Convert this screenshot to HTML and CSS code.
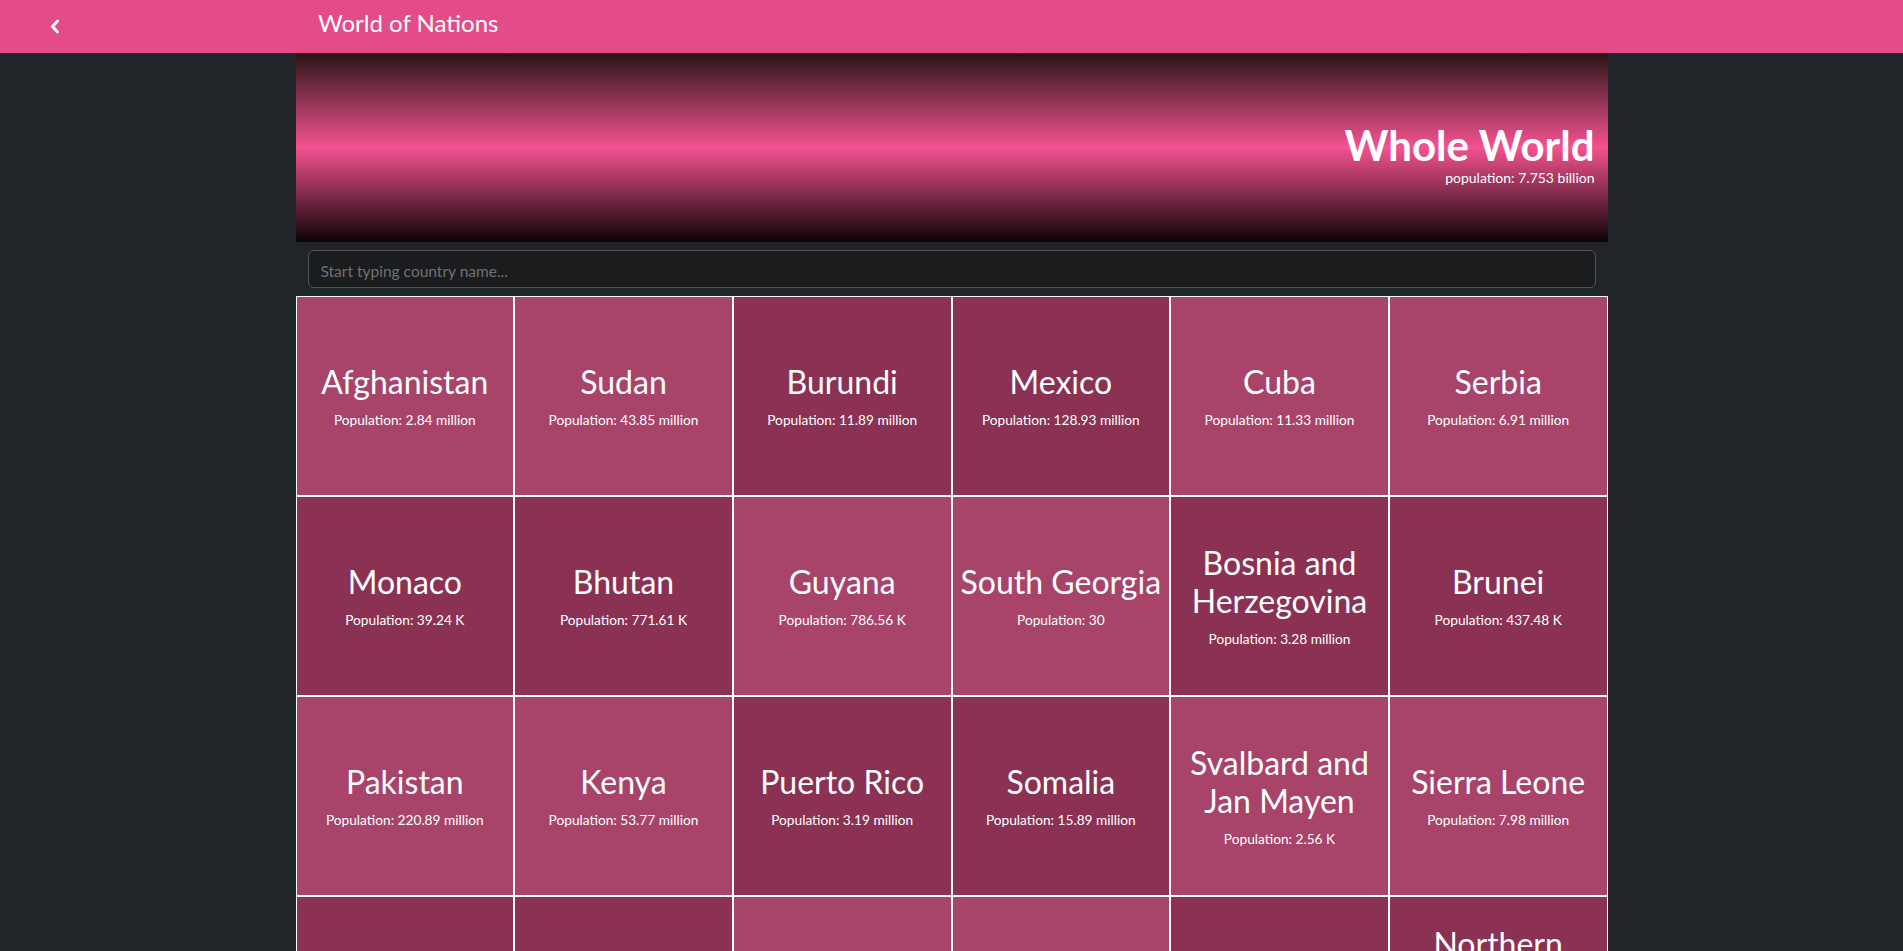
FILE: index.html
```html
<!DOCTYPE html>
<html lang="en">
<head>
<meta charset="utf-8">
<title>World of Nations</title>
<link rel="stylesheet" href="styles.css">
</head>
<body>
<header class="topbar">
  <a class="back" href="#" aria-label="Back">
    <svg width="10" height="15" viewBox="0 0 10 15"><polyline points="7.5,2 2.5,7.5 7.5,13" fill="none" stroke="#fff" stroke-width="3" stroke-linecap="round" stroke-linejoin="round"/></svg>
  </a>
  <span class="brand">World of Nations</span>
</header>
<main class="container">
  <section class="banner">
    <h1 class="banner-title">Whole World</h1>
    <div class="banner-pop">population: 7.753 billion</div>
  </section>
  <div class="search">
    <input class="search-input" type="text" placeholder="Start typing country name...">
  </div>
  <div class="grid">
    <div class="cell light"><h2 class="name">Afghanistan</h2><div class="pop">Population: 2.84 million</div></div>
    <div class="cell light"><h2 class="name">Sudan</h2><div class="pop">Population: 43.85 million</div></div>
    <div class="cell dark"><h2 class="name">Burundi</h2><div class="pop">Population: 11.89 million</div></div>
    <div class="cell dark"><h2 class="name">Mexico</h2><div class="pop">Population: 128.93 million</div></div>
    <div class="cell light"><h2 class="name">Cuba</h2><div class="pop">Population: 11.33 million</div></div>
    <div class="cell light"><h2 class="name">Serbia</h2><div class="pop">Population: 6.91 million</div></div>

    <div class="cell dark"><h2 class="name">Monaco</h2><div class="pop">Population: 39.24 K</div></div>
    <div class="cell dark"><h2 class="name">Bhutan</h2><div class="pop">Population: 771.61 K</div></div>
    <div class="cell light"><h2 class="name">Guyana</h2><div class="pop">Population: 786.56 K</div></div>
    <div class="cell light"><h2 class="name">South Georgia</h2><div class="pop">Population: 30</div></div>
    <div class="cell dark"><h2 class="name">Bosnia and Herzegovina</h2><div class="pop">Population: 3.28 million</div></div>
    <div class="cell dark"><h2 class="name">Brunei</h2><div class="pop">Population: 437.48 K</div></div>

    <div class="cell light"><h2 class="name">Pakistan</h2><div class="pop">Population: 220.89 million</div></div>
    <div class="cell light"><h2 class="name">Kenya</h2><div class="pop">Population: 53.77 million</div></div>
    <div class="cell dark"><h2 class="name">Puerto Rico</h2><div class="pop">Population: 3.19 million</div></div>
    <div class="cell dark"><h2 class="name">Somalia</h2><div class="pop">Population: 15.89 million</div></div>
    <div class="cell light"><h2 class="name">Svalbard and Jan Mayen</h2><div class="pop">Population: 2.56 K</div></div>
    <div class="cell light"><h2 class="name">Sierra Leone</h2><div class="pop">Population: 7.98 million</div></div>

    <div class="cell dark"><h2 class="name">Equatorial Guinea</h2><div class="pop">Population: 1.4 million</div></div>
    <div class="cell dark"><h2 class="name">Tonga</h2><div class="pop">Population: 105.7 K</div></div>
    <div class="cell light"><h2 class="name">Chile</h2><div class="pop">Population: 19.12 million</div></div>
    <div class="cell light"><h2 class="name">Norway</h2><div class="pop">Population: 5.38 million</div></div>
    <div class="cell dark"><h2 class="name">Ghana</h2><div class="pop">Population: 31.07 million</div></div>
    <div class="cell dark"><h2 class="name">Northern Mariana Islands</h2><div class="pop">Population: 57.56 K</div></div>
  </div>
</main>
</body>
</html>
```
FILE: styles.css
```css
* { box-sizing: border-box; }

html, body {
  margin: 0;
  padding: 0;
  background: #212529;
  color: #fff;
  font-family: "Lato", "Open Sans", "Liberation Sans", sans-serif;
}

.topbar {
  height: 53px;
  background: #e34c88;
  display: flex;
  align-items: center;
}

.back {
  width: 296px;
  height: 53px;
  display: flex;
  align-items: center;
  padding-left: 50px;
}

.back svg { display: block; }

.brand {
  padding: 0 0 8px 22px;
  font-size: 24px;
  line-height: 1;
  color: #fff;
}

.container {
  width: 1312px;
  margin: 0 auto;
}

.banner {
  height: 189px;
  background: linear-gradient(to bottom, #2a1418 0%, #f45290 50%, #0c0305 100%);
  display: flex;
  flex-direction: column;
  justify-content: flex-end;
  align-items: flex-end;
  padding: 0 13px 56px 0;
}

.banner-title {
  margin: 0;
  font-size: 42px;
  font-weight: 700;
  line-height: 48px;
}

.banner-pop {
  font-size: 14px;
  line-height: 17px;
}

.search {
  padding: 8px 12px;
}

.search-input {
  display: block;
  width: 100%;
  height: 38px;
  padding: 8px 12px 4px;
  background: #1b1c1e;
  border: 1px solid #4f555b;
  border-radius: 6px;
  color: #dee2e6;
  font-family: inherit;
  font-size: 15.5px;
  outline: none;
}

.search-input::placeholder { color: #6d7278; }

.grid {
  display: grid;
  grid-template-columns: repeat(6, 1fr);
}

.cell {
  height: 200px;
  border: 1px solid #fff;
  padding: 0 4px;
  display: flex;
  flex-direction: column;
  justify-content: center;
  align-items: center;
  text-align: center;
}

.light { background: #a8446a; }
.dark { background: #8b3153; }

.name {
  margin: 0 0 8px;
  font-size: 32px;
  font-weight: 400;
  line-height: 38px;
}

.pop {
  font-size: 13.7px;
  line-height: 21px;
}
```
